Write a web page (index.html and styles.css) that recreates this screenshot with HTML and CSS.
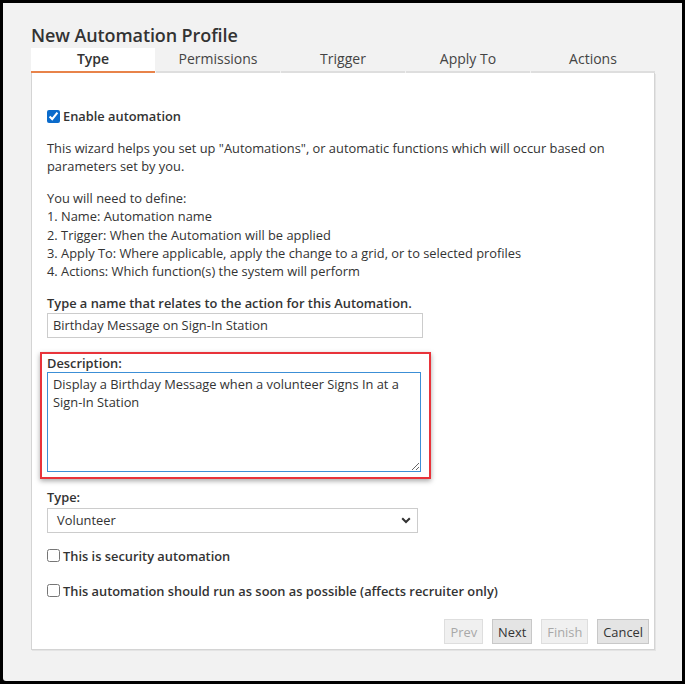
FILE: index.html
```html
<!DOCTYPE html>
<html>
<head>
<meta charset="utf-8">
<link rel="stylesheet" href="styles.css">
</head>
<body>
<div class="frame">
  <div class="window">
    <h1 class="title">New Automation Profile</h1>
    <div class="tabs">
      <div class="tab active">Type</div>
      <div class="tab">Permissions</div>
      <div class="tab">Trigger</div>
      <div class="tab">Apply To</div>
      <div class="tab">Actions</div>
    </div>
    <div class="panel">
      <label class="check first"><input type="checkbox" checked> <span class="bold">Enable automation</span></label>
      <p class="para">This wizard helps you set up "Automations", or automatic functions which will occur based on parameters set by you.</p>
      <p class="para">You will need to define:<br>1. Name: Automation name<br>2. Trigger: When the Automation will be applied<br>3. Apply To: Where applicable, apply the change to a grid, or to selected profiles<br>4. Actions: Which function(s) the system will perform</p>
      <div class="label">Type a name that relates to the action for this Automation.</div>
      <input class="text" type="text" value="Birthday Message on Sign-In Station">
      <div class="highlight">
        <div class="label">Description:</div>
        <textarea class="area">Display a Birthday Message when a volunteer Signs In at a Sign-In Station</textarea>
      </div>
      <div class="label typelabel">Type:</div>
      <div class="selectbox">
        <span>Volunteer</span>
        <svg class="chev" width="10" height="7" viewBox="0 0 10 7"><path d="M1.2 1.2 L5 5 L8.8 1.2" fill="none" stroke="#333" stroke-width="2"/></svg>
      </div>
      <label class="check c2"><input type="checkbox"> <span class="bold">This is security automation</span></label>
      <label class="check c3"><input type="checkbox"> <span class="bold">This automation should run as soon as possible (affects recruiter only)</span></label>
      <div class="buttons">
        <button class="btn disabled">Prev</button>
        <button class="btn">Next</button>
        <button class="btn disabled">Finish</button>
        <button class="btn">Cancel</button>
      </div>
    </div>
  </div>
</div>
</body>
</html>
```
FILE: styles.css
```css
html, body { margin: 0; padding: 0; background: #000; }
body { width: 685px; height: 684px; overflow: hidden; font-family: "Open Sans", "Noto Sans", sans-serif; color: #333; }
.frame { padding: 3px 3px 3px 3px; height: 684px; box-sizing: border-box; }
.window { background: #f2f2f2; height: 678px; width: 679px; padding: 0 0 0 28px; box-sizing: border-box; border-radius: 0 0 0 3px; }
.title { margin: 0; padding-top: 20px; font-size: 18px; font-weight: 600; line-height: 24px; color: #333; height: 25px; letter-spacing: -0.1px; }
.tabs { display: flex; width: 624px; height: 25px; }
.tab { flex: 1; text-align: center; font-size: 14px; line-height: 22px; color: #444; border-bottom: 2px solid #dedede; margin-right: 1px; box-sizing: border-box; height: 25px; padding-top: 0px; }
.tab:last-child { margin-right: 0; }
.tab.active { background: #fff; border-bottom: 2px solid #e8834a; font-weight: 600; color: #333; }
.panel { width: 624px; height: 577px; background: #fff; border: 1px solid #d4d4d4; border-top: none; box-sizing: border-box; box-shadow: 1px 1px 0 #e4e4e4; padding: 34px 0 0 15px; position: relative; font-size: 12.85px; }
.check { display: flex; align-items: center; font-size: 12.85px; line-height: 18px; }
.check input { margin: 0 3px 0 0; width: 13px; height: 13px; accent-color: #0b6bcb; }
.check.first { margin-bottom: 14px; }
.bold { font-weight: 600; }
.para { margin: 0 0 13px 0; line-height: 18.4px; font-size: 12.85px; width: 590px; }
.label { font-weight: 600; font-size: 12.85px; line-height: 18px; margin-top: 0; }
.text { display: block; margin: 1px 0 0 0; width: 376px; height: 25px; box-sizing: border-box; border: 1px solid #ccc; padding: 0 5px; font-family: inherit; font-size: 12.85px; color: #333; outline: none; }
.highlight { margin: 14px 0 0 -7px; width: 391px; height: 127px; box-sizing: border-box; border: 2px solid #e8333a; box-shadow: 0 2px 5px rgba(0,0,0,0.35); padding: 0 0 0 5px; }
.area { display: block; margin: 0; width: 374px; height: 100px; box-sizing: border-box; border: 1px solid #3c8fd6; padding: 2px 5px; font-family: inherit; font-size: 12.85px; line-height: 18.5px; color: #333; resize: both; outline: none; }
.typelabel { margin-top: 9px; }
.selectbox { margin-top: 2px; width: 371px; height: 25px; box-sizing: border-box; border: 1px solid #ccc; display: flex; align-items: center; justify-content: space-between; padding: 0 4px 0 9px; font-size: 12.85px; }
.chev { margin-right: 2px; }
.c2 { margin-top: 14px; }
.c3 { margin-top: 17px; }
.buttons { position: absolute; right: 5px; bottom: 5px; display: flex; gap: 9px; }
.btn { height: 25px; padding: 0 5px; border: 1px solid #c8c8c8; background: #e4e4e4; font-family: inherit; font-size: 12.85px; color: #333; border-radius: 0; }
.btn.disabled { background: #f0f0f0; color: #a8a8a8; border-color: #dedede; }
```
